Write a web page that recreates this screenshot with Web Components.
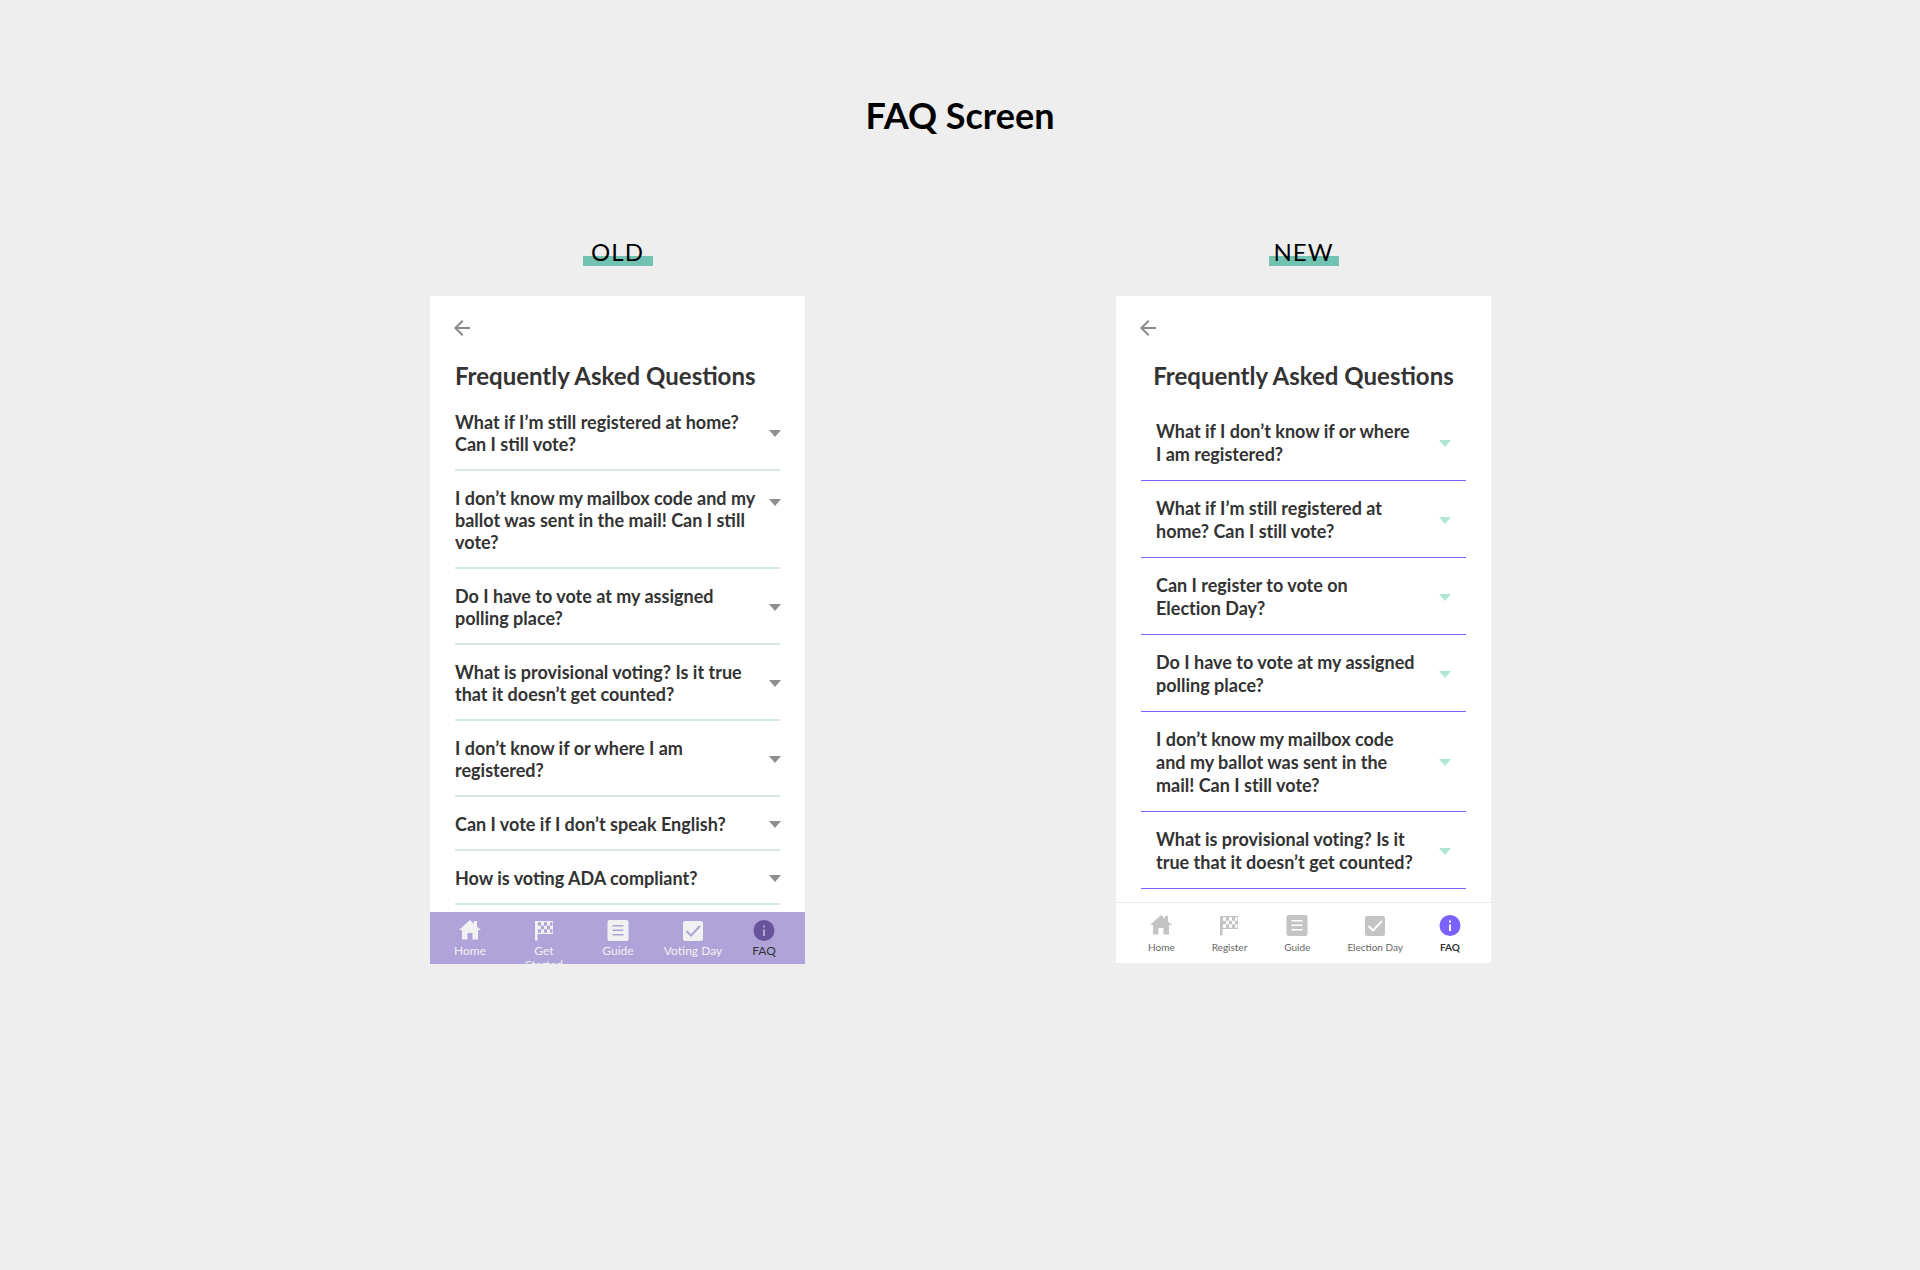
<!DOCTYPE html>
<html lang="en">
<head>
<meta charset="utf-8">
<title>FAQ Screen</title>
<style>
body { margin: 0; background: #eee; font-family: Lato, "Liberation Sans", sans-serif; color: #333; }
</style>
</head>
<body>
<comparison-board heading="FAQ Screen">
  <screen-column label="OLD">
    <phone-screen theme="old" heading="Frequently Asked Questions">
      <faq-item>What if I’m still registered at home? Can I still vote?</faq-item>
      <faq-item marker="start">I don’t know my mailbox code and my ballot was sent in the mail! Can I still vote?</faq-item>
      <faq-item>Do I have to vote at my assigned polling place?</faq-item>
      <faq-item>What is provisional voting? Is it true that it doesn’t get counted?</faq-item>
      <faq-item>I don’t know if or where I am registered?</faq-item>
      <faq-item>Can I vote if I don’t speak English?</faq-item>
      <faq-item>How is voting ADA compliant?</faq-item>
      <tab-bar slot="nav">
        <tab-link icon="home">Home</tab-link>
        <tab-link icon="flag">Get<br>Started</tab-link>
        <tab-link icon="guide">Guide</tab-link>
        <tab-link icon="check">Voting Day</tab-link>
        <tab-link icon="info" active>FAQ</tab-link>
      </tab-bar>
    </phone-screen>
  </screen-column>
  <screen-column label="NEW">
    <phone-screen theme="new" heading="Frequently Asked Questions">
      <faq-item>What if I don’t know if or where I am registered?</faq-item>
      <faq-item>What if I’m still registered at home? Can I still vote?</faq-item>
      <faq-item>Can I register to vote on Election Day?</faq-item>
      <faq-item>Do I have to vote at my assigned polling place?</faq-item>
      <faq-item>I don’t know my mailbox code and my ballot was sent in the mail! Can I still vote?</faq-item>
      <faq-item>What is provisional voting? Is it true that it doesn’t get counted?</faq-item>
      <tab-bar slot="nav">
        <tab-link icon="home">Home</tab-link>
        <tab-link icon="flag">Register</tab-link>
        <tab-link icon="guide">Guide</tab-link>
        <tab-link icon="check">Election Day</tab-link>
        <tab-link icon="info" active>FAQ</tab-link>
      </tab-bar>
    </phone-screen>
  </screen-column>
</comparison-board>

<script>
class BaseElement extends HTMLElement {
  connectedCallback() {
    if (this.shadowRoot) return;
    this.attachShadow({ mode: "open" }).innerHTML = this.render();
  }
}

customElements.define("comparison-board", class extends BaseElement {
  render() {
    return `<style>
      :host { display: block; padding: 93px 24px; }
      h1 { margin: 0 0 103px; font-size: 36px; line-height: 44px; font-weight: 700; text-align: center; color: #000; }
      .columns { display: flex; justify-content: center; gap: 311px; align-items: flex-start; padding-left: 1px; }
    </style>
    <h1>${this.getAttribute("heading")}</h1>
    <div class="columns"><slot></slot></div>`;
  }
});

customElements.define("screen-column", class extends BaseElement {
  render() {
    return `<style>
      :host { display: flex; flex-direction: column; align-items: center; gap: 30px; width: 375px; }
      h2 { margin: 0; width: 70px; padding-bottom: 2px; font-size: 24px; line-height: 24px; font-weight: 400; letter-spacing: 1px;
        text-align: center; color: #000; background: linear-gradient(#71c3b1, #71c3b1) bottom / 100% 10px no-repeat; }
      ::slotted(*) { align-self: stretch; }
    </style>
    <h2>${this.getAttribute("label")}</h2>
    <slot></slot>`;
  }
});

customElements.define("phone-screen", class extends BaseElement {
  render() {
    return `<style>
      :host { display: block; background: #fff; overflow: hidden; }
      :host([theme="old"]) {
        --row-pad: 16px 0 14px; --row-line: 22px; --row-border: 2px solid #d6e9e4; --row-gap: 8px;
        --marker: #8f8f8f; --marker-shift: -1px; --ligatures: normal;
        --list-gap: 4px; --list-end: 7px; --title-align: left;
        --nav-display: grid; --nav-height: 52px; --nav-pad: 6px 8px 0 3px; --nav-bg: #b0a3d9; --nav-border: 0;
        --tab: #f1f1f2; --tab-text: #f1f1f2; --tab-active: #67549b; --tab-active-text: #333; --tab-active-weight: 400;
        --tab-size: 12px; --tab-line: 14px; --tab-gap: 2px; --hole: #b0a3d9;
      }
      :host([theme="new"]) {
        --row-pad: 16px 15px 14px; --row-line: 23px; --row-border: 1px solid #7b61ff; --row-gap: 24px;
        --marker: #aee6d2; --marker-shift: 0px; --ligatures: none;
        --list-gap: 13px; --list-end: 13px; --title-align: center;
        --nav-display: flex; --nav-height: 61px; --nav-pad: 10px 31px 0 32px; --nav-bg: #fff; --nav-border: 1px solid #e8e8e8;
        --tab: #c4c4c4; --tab-text: #666; --tab-active: #7b61ff; --tab-active-text: #333; --tab-active-weight: 700;
        --tab-size: 10px; --tab-line: 12px; --tab-gap: 4px; --hole: #fff;
      }
      header { padding: 20px 20px 0; }
      button { display: block; padding: 0; border: 0; background: none; width: 24px; height: 24px; color: #8a8a8a; }
      svg { display: block; }
      h3 { margin: 21px 5px 0; font-size: 24px; line-height: 30px; font-weight: 700; text-align: var(--title-align); }
      main { padding: var(--list-gap) 25px var(--list-end); }
    </style>
    <header>
      <button type="button" aria-label="Back"><svg width="24" height="24" viewBox="0 0 24 24" fill="currentColor"><path d="M20 11H7.83l5.59-5.59L12 4l-8 8 8 8 1.41-1.41L7.83 13H20v-2z"/></svg></button>
      <h3>${this.getAttribute("heading")}</h3>
    </header>
    <main><slot></slot></main>
    <footer><slot name="nav"></slot></footer>`;
  }
});

customElements.define("faq-item", class extends BaseElement {
  render() {
    return `<style>
      :host { display: block; border-bottom: var(--row-border); }
      button { display: flex; width: 100%; box-sizing: border-box; align-items: center; justify-content: space-between; gap: var(--row-gap);
        margin: 0; padding: var(--row-pad); border: 0; background: none; color: inherit;
        font: 700 18px/var(--row-line) Lato, "Liberation Sans", sans-serif;
        font-variant-ligatures: var(--ligatures); text-align: left; }
      svg { display: block; flex: none; margin-right: var(--marker-shift); fill: var(--marker); }
      :host([marker="start"]) svg { align-self: flex-start; margin-top: 12px; }
    </style>
    <button type="button" aria-expanded="false"><span><slot></slot></span><svg width="12" height="7" viewBox="0 0 12 7"><path d="M0 0h12L6 7z"/></svg></button>`;
  }
});

customElements.define("tab-bar", class extends BaseElement {
  render() {
    return `<style>
      :host { display: block; }
      nav { display: var(--nav-display); grid-template-columns: 74fr 74fr 74fr 76fr 66fr; justify-content: space-between;
        height: var(--nav-height); padding: var(--nav-pad); box-sizing: border-box; overflow: hidden;
        background: var(--nav-bg); border-top: var(--nav-border); }
    </style>
    <nav aria-label="Main"><slot></slot></nav>`;
  }
});

const ICONS = {
  home: `<path d="M12 2l4 3.7V3h3v5.4l4 3.6h-3v9.5h-5.500V15H9.500v6.500H4V12H1z"/>`,
  flag: `<path d="M3 3h18v13H5.500v6.500H3z"/><path class="hole" d="M6 4.200h3v3.500H6zM12 4.200h3v3.500h-3zM18 4.200h2.400v3.500H18zM9 7.700h3v3.500H9zM15 7.700h3v3.500h-3zM6 11.200h3v3.500H6zM12 11.200h3v3.500h-3zM18 11.200h2.400v3.500H18z"/>`,
  guide: `<rect x="1.500" y="2" width="21" height="21" rx="2"/><path class="hole" d="M6.500 7h11v1.500h-11zM6.500 11.500h11V13h-11zM6.500 16h11v1.500h-11z"/>`,
  check: `<rect x="2" y="3" width="20" height="20" rx="2"/><path class="line" d="M5.500 13l4.500 4.500 9-9.500"/>`,
  info: `<circle cx="12" cy="12.500" r="10.500"/><path class="hole" d="M11 11.500h2V18h-2zM11 7.500h2v2h-2z"/>`
};

customElements.define("tab-link", class extends BaseElement {
  render() {
    return `<style>
      :host { display: block; min-width: 0; }
      a { display: flex; flex-direction: column; align-items: center; gap: var(--tab-gap); text-decoration: none; text-align: center;
        color: var(--tab-text); font-size: var(--tab-size); line-height: var(--tab-line); white-space: nowrap; }
      svg { display: block; fill: var(--tab); margin: 0 -2px; }
      .hole { fill: var(--hole); }
      .line { fill: none; stroke: var(--hole); stroke-width: 2; }
      :host([active]) svg { fill: var(--tab-active); }
      :host([active]) a { color: var(--tab-active-text); font-weight: var(--tab-active-weight); }
    </style>
    <a href="#${this.getAttribute("icon")}"><svg width="24" height="24" viewBox="0 0 24 24" aria-hidden="true">${ICONS[this.getAttribute("icon")]}</svg><span><slot></slot></span></a>`;
  }
});
</script>
</body>
</html>
